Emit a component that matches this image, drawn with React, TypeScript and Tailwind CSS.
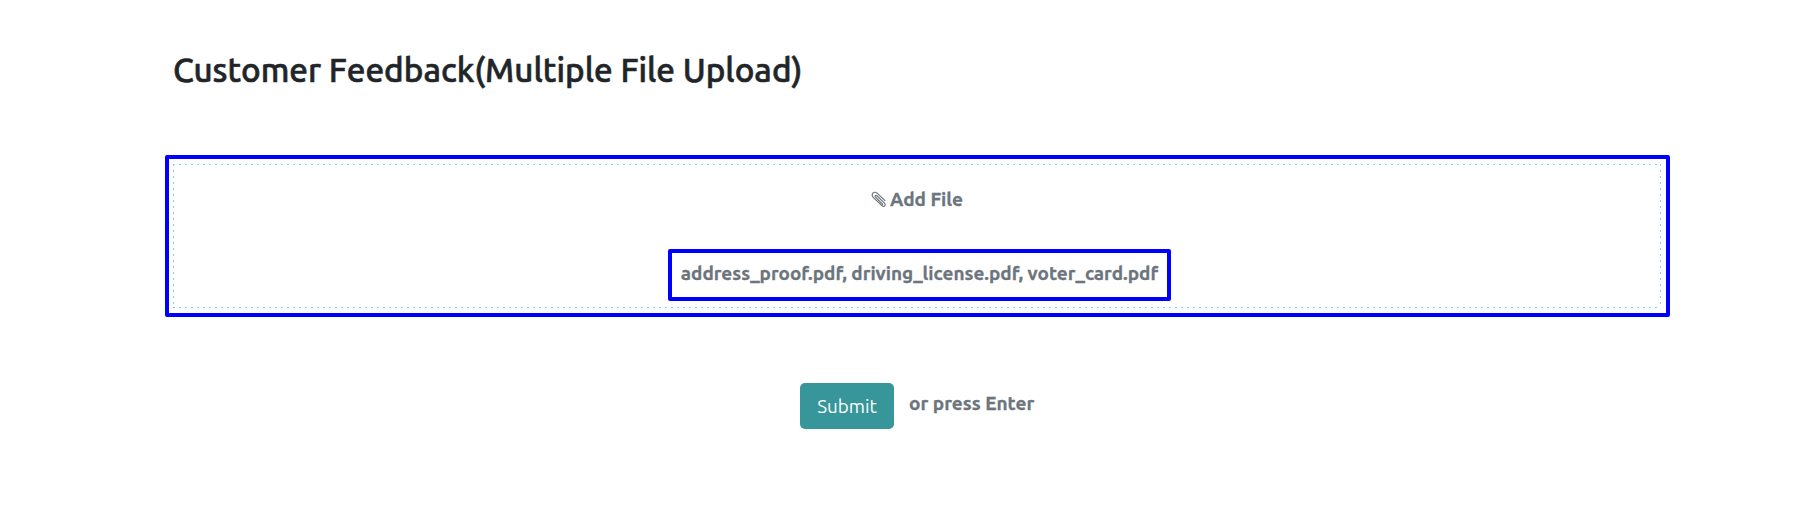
import React from "react";

const files = ["address_proof.pdf", "driving_license.pdf", "voter_card.pdf"];

const dashX = "repeating-linear-gradient(to right, #87ceeb 0 2px, transparent 2px 6px)";
const dashY = "repeating-linear-gradient(to bottom, #87ceeb 0 2px, transparent 2px 6px)";

function Paperclip() {
  return (
    <svg viewBox="0 0 16 16" className="h-[17px] w-[17px] shrink-0" fill="none" stroke="#6c757d" strokeWidth="1.1" strokeLinecap="round" strokeLinejoin="round">
      <path d="M10.9 12.5 4.2 5.8C3.2 4.8 4.5 3.5 5.5 4.5L12.5 11.2C14.7 13.4 12.3 15.8 10 13.6L2.5 6.4C-.7 3.3 2.7-.8 6 2.2L13.2 9" />
    </svg>
  );
}

export default function App() {
  return (
    <main className="flex h-[506px] w-full flex-col bg-white pl-[165px] font-['Ubuntu','Noto_Sans',sans-serif] text-[#6c757d]">
      <h1 className="mt-[50px] ml-[8px] h-[105px] text-[33.25px] leading-[40px] font-medium whitespace-nowrap text-[#212529] [-webkit-text-stroke:0.6px_#212529]">
        Customer Feedback(Multiple File Upload)
      </h1>
      <section className="h-[162px] w-[1505px] rounded-[2px] border-4 border-[#0000ff] pt-[5px] pl-1">
        <div
          className="flex h-[144px] w-[1488px] flex-col items-center bg-[length:100%_1px,100%_1px,1px_100%,1px_100%] bg-[position:top,bottom,left,right] bg-no-repeat"
          style={{ backgroundImage: [dashX, dashX, dashY, dashY].join(", ") }}
        >
          <label className="mt-[22px] flex h-[26px] items-center gap-[2px] text-[19px] leading-[26px] font-bold whitespace-nowrap [-webkit-text-stroke:0.3px_#6c757d]">
            <Paperclip />
            <span>Add File</span>
          </label>
          <div className="mt-[37px] ml-[5px] flex h-[52px] w-[503px] items-center justify-center rounded-[2px] border-4 border-[#0000ff] pb-[5px] text-[18.95px] leading-[26px] font-bold whitespace-nowrap [-webkit-text-stroke:0.3px_#6c757d]">
            {files.join(", ")}
          </div>
        </div>
      </section>
      <div className="mt-[66px] ml-[635px] flex items-start">
        <button className="h-[46px] w-[94px] rounded-[5px] bg-[#369699] text-[18.8px] leading-[26px] text-white">Submit</button>
        <span className="mt-[7px] ml-[15px] text-[19px] leading-[26px] font-bold whitespace-nowrap [-webkit-text-stroke:0.3px_#6c757d]">or press Enter</span>
      </div>
    </main>
  );
}
